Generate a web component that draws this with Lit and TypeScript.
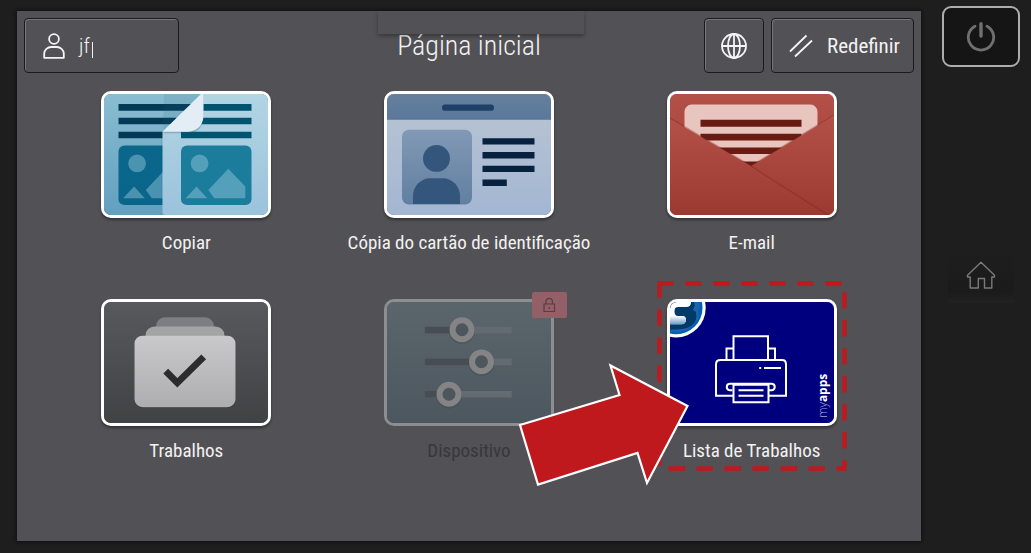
import { LitElement, html, svg, css, nothing } from "lit";
import { customElement, property } from "lit/decorators.js";

type Tile = { id: string; label: string; locked?: boolean; marked?: boolean };

const TILES: Tile[] = [
  { id: "copy", label: "Copiar" },
  { id: "idcard", label: "Cópia do cartão de identificação" },
  { id: "email", label: "E-mail" },
  { id: "jobs", label: "Trabalhos" },
  { id: "device", label: "Dispositivo", locked: true },
  { id: "joblist", label: "Lista de Trabalhos", marked: true },
];

const gradient = (id: string, from: string, to: string) => svg`
  <linearGradient id=${id} x1="0" y1="0" x2="0" y2="1">
    <stop offset="0" stop-color=${from} /><stop offset="1" stop-color=${to} />
  </linearGradient>`;

const picture = (tint: string) => svg`
  <rect x="77" y="52" width="70.5" height="60" rx="6" fill=${tint} />
  <g fill="#8cc4da" fill-opacity=".5">
    <circle cx="95.6" cy="70" r="8.9" />
    <path d="M81.6 105 92.6 93.3 103.3 105Z" />
    <path d="M104.3 96.7 124.3 75.3 141.3 93.3V105H110.3Z" />
  </g>`;

const ART: Record<string, unknown> = {
  copy: svg`
    <defs>${gradient("back", "#8abdd1", "#629fbf")}${gradient("front", "#b2d5e3", "#9bc3dc")}</defs>
    <rect width="164" height="122" fill="url(#back)" />
    <path d="M14.5 10h80v7h-80zM14.5 24h80v6.500h-80zM14.500 38h60v6.500h-60z" fill="#033b57" />
    <g transform="translate(-62.500 0)" opacity=".9">${picture("#005f85")}</g>
    <path d="M57 122V38L97 0H60Z" fill="#285f7c" fill-opacity=".12" />
    <path d="M58.500 119V38L98 0H164V122H61.500Q58.500 122 58.500 119Z" fill="url(#front)" />
    <path d="M97 10h50.500v7H97zM90 24h57.500v6.500H90zM77 38h70.500v6.500H77z" fill="#00546f" />
    ${picture("#1c7c9b")}
    <path d="M58.500 39.500 99.500 0V23Q99 39 84 39.500Z" fill="#2a6379" fill-opacity=".3" />
    <path d="M58.500 38 97 0H99.500V23Q98 37 84 38Z" fill="#e2edf5" />`,
  idcard: svg`
    <defs>${gradient("card", "#b9c5d3", "#a3b6d2")}${gradient("band", "#65809d", "#5b789c")}${gradient("photo", "#8199b5", "#617fa1")}</defs>
    <rect width="164" height="122" fill="url(#card)" />
    <rect width="164" height="26" fill="url(#band)" />
    <rect x="55" y="10.500" width="52" height="6.500" rx="3" fill="#1f4069" />
    <rect x="15" y="36" width="70" height="75.500" rx="7" fill="url(#photo)" />
    <circle cx="49.500" cy="65" r="13.500" fill="#35567c" />
    <path d="M26 111V103A17 18 0 0 1 43 85H56A17 18 0 0 1 73 103V111Z" fill="#35567c" />
    <path d="M95.500 44.500h52V51h-52zM95.500 58.500h52V65h-52zM95.500 72.300h52v6.400h-52zM95.500 86.300h24.300v6.400H95.500z" fill="#08213f" />`,
  email: svg`
    <defs>${gradient("inside", "#b35048", "#9f3f37")}${gradient("flap", "#b35048", "#9c3930")}</defs>
    <rect width="164" height="122" fill="url(#inside)" />
    <rect x="14.500" y="10.700" width="133" height="80" rx="7" fill="#e8c5bf" />
    <path d="M30.500 26h101v7h-101zM30.500 40h101v7h-101zM30.500 54h101v6.500h-101zM30.500 68h101v6.500h-101z" fill="#671b12" />
    <path d="M81 71.500 164 20.500V122H0V23.500Z" fill="#7c211a" fill-opacity=".35" />
    <path d="M81 72.700 164 21.700V122H60Z" fill="url(#flap)" />
    <path d="M0 25 81 72.700 158 122H0Z" fill="url(#flap)" />
    <path d="M81 72.700 158 122" stroke="#7d2a24" stroke-opacity=".5" stroke-width="1.200" />`,
  jobs: svg`
    <defs>${gradient("slate", "#57595c", "#414244")}${gradient("sheet", "#c9c9cb", "#aeaeb1")}</defs>
    <rect width="164" height="122" fill="url(#slate)" />
    <rect x="52" y="15.500" width="58" height="30" rx="9" fill="#7d7e81" />
    <rect x="41.500" y="24.700" width="79" height="30" rx="9" fill="#a3a4a6" />
    <rect x="30.500" y="35" width="101" height="72" rx="8" fill="#222" fill-opacity=".35" />
    <rect x="30.500" y="34" width="101" height="72" rx="8" fill="url(#sheet)" />
    <path d="M61.700 69.700 73.300 81.500 99.700 55.300" fill="none" stroke="#2c2c2e" stroke-width="6.800" />`,
  device: svg`
    <defs>${gradient("steel", "#5b656c", "#4d575f")}</defs>
    <rect width="164" height="122" fill="url(#steel)" />
    <path d="M37.700 25h87v6.700h-87zM37.700 57h87v6.700h-87zM37.700 89.700h87v6.700h-87z" fill="#626b72" />
    <path d="M37.700 25H70v6.700H37.700zM37.700 57H90v6.700H37.700zM37.700 89.700H58v6.700H37.700z" fill="#474d52" />
    <g fill="none" stroke="#3d454b" stroke-opacity=".3" stroke-width="7">
      <circle cx="75" cy="29.300" r="9.500" /><circle cx="94.500" cy="61.600" r="9.500" /><circle cx="62" cy="94.300" r="9.500" />
    </g>
    <g fill="#4d565d" stroke="#848486" stroke-width="6">
      <circle cx="75" cy="28" r="9.500" /><circle cx="94.500" cy="60.300" r="9.500" /><circle cx="62" cy="93" r="9.500" />
    </g>`,
  joblist: svg`
    <defs>
      <clipPath id="disc"><circle cx="6" cy="6" r="26.500" /></clipPath>
      <linearGradient id="fade" x1="0" y1="0" x2="0" y2="1">
        <stop offset="0" stop-color="#fff" /><stop offset="1" stop-color="#6d9cc4" />
      </linearGradient>
    </defs>
    <rect width="164" height="122" fill="#00007f" />
    <circle cx="6" cy="6" r="29.700" fill="#fff" />
    <g clip-path="url(#disc)">
      <rect width="36" height="36" fill="#005fb8" />
      <path d="M24 0H29Q31 5 28 9 30 15 26 20 20 29 8 30H0V26H10Z" fill="#1c66ab" />
      <path d="M0 0H23V8L26 10Q28 20 20 25 15 28 0 28Z" fill="#003a69" />
      <path d="M0 0H21V1Q21 5 17 5H8Q4.500 5 4.500 9.500T8 14H12Q16 14 16 18T12 22.500H0Z" fill="#fff" />
      <path d="M0 14H12Q16 14 16 18T12 22.500H0Z" fill="url(#fade)" />
      <path d="M21 0H24Q26 5 22.500 8H17V5Q21 5 21 1Z" fill="#003a69" />
    </g>
    <g fill="none" stroke="#fff" stroke-width="2">
      <path d="M63.500 58.500V34.500H98V58.500" />
      <path d="M56.500 58.500V47H63M98 47H105V58.500" />
      <path d="M63 94.500H46V63Q46 58.500 50.500 58.500H112Q116 58.500 116 63V94.500H99" />
      <path d="M62.500 89H59.500A3.300 3.300 0 0 1 59.500 82.500H102A3.300 3.300 0 0 1 102 89H99" />
      <path d="M63.500 83.500H98.500V101H63.500Z" />
      <path d="M68.500 89H93.500M68.500 94.500H93.500M94 66.500H111M89.200 66.500H91.200" />
    </g>
    <text transform="translate(157 117) rotate(-90)" font-family="Open Sans" font-size="12" fill="#fff"><tspan font-weight="300" fill="#a5a5da">my</tspan><tspan font-weight="700">apps</tspan></text>`,
};

@customElement("app-tile")
export class AppTile extends LitElement {
  @property() kind = "";
  @property() label = "";
  @property({ type: Boolean, reflect: true }) locked = false;
  @property({ type: Boolean }) marked = false;

  static styles = css`
    :host { display: flex; justify-content: center; }
    .tile {
      position: relative; display: flex; flex-direction: column; align-items: center; gap: 14px;
      width: 170px; margin: 0; padding: 0; border: 0; background: none; color: #f2f2f2;
      font: 400 19px/22px "Roboto Condensed", Roboto, sans-serif; cursor: pointer;
    }
    .art {
      display: block; box-sizing: border-box; width: 100%; height: 127px; overflow: hidden;
      border: 3px solid #fff; border-radius: 10px; box-shadow: 0 2px 3px #0006;
    }
    .art svg { display: block; width: 100%; height: 100%; }
    .label { white-space: nowrap; }
    .tile:disabled { color: #38383b; cursor: default; }
    .tile:disabled .art { border-color: #8d8e91; box-shadow: none; }
    .badge {
      position: absolute; top: -7px; right: -13px; display: grid; place-items: center;
      width: 35px; height: 26px; border-radius: 2px; background: #936067;
    }
    .marker { position: absolute; top: -18px; left: -10px; width: 190px; height: 190px; pointer-events: none; }
    .arrow { position: absolute; top: 64px; left: -150px; width: 174px; height: 126px; pointer-events: none; }
  `;

  render() {
    return html`
      <button class="tile" type="button" ?disabled=${this.locked}>
        <span class="art"><svg viewBox="0 0 164 122" preserveAspectRatio="none" aria-hidden="true">${ART[this.kind]}</svg></span>
        <span class="label">${this.label}</span>
        ${this.locked
          ? html`<span class="badge"><svg width="14" height="16" viewBox="0 0 14 16" fill="none" stroke="#5d3a42" stroke-width="1.200">
              <path d="M2 7H12.500V14.500H2ZM4 7V4.500A3.200 3.200 0 0 1 10.400 4.500V7M7.200 10V12" /></svg></span>`
          : nothing}
        ${this.marked
          ? html`<svg class="marker" viewBox="0 0 190 190" aria-hidden="true">
                <path d="M2.500 2.500H187.500V187.500H2.500Z" fill="none" stroke="#bf181d" stroke-width="4.300" stroke-dasharray="16.300 11.700" stroke-dashoffset="2.300" />
              </svg>
              <svg class="arrow" viewBox="0 0 174 126" aria-hidden="true">
                <path d="M3 62 102.500 32 93.500 2.500 170.500 43 130 120 120.500 90 21 121.500Z" fill="#bf181d" stroke="#fff" stroke-width="2.200" />
              </svg>`
          : nothing}
      </button>`;
  }
}

@customElement("app-root")
export class AppRoot extends LitElement {
  static styles = css`
    :host {
      display: block; min-height: 100vh; background: #1e1e1e; color: #f2f2f2;
      font-family: "Roboto Condensed", Roboto, sans-serif;
    }
    .panel { display: grid; grid-template-columns: minmax(0, 1fr) 110px; min-height: 100vh; }
    .screen {
      position: relative; display: flex; flex-direction: column; gap: 18px;
      margin: 11px 0 12px 17px; padding: 7px; background: #525155; box-shadow: 0 0 3px 1px #101010;
    }
    .notch { position: absolute; top: 0; left: 361px; width: 206px; height: 23px; background: #525155; box-shadow: 0 2px 4px #0005; }
    .bar { display: grid; grid-template-columns: 1fr auto 1fr; align-items: center; }
    .tools { display: flex; justify-content: flex-end; gap: 7px; }
    .btn {
      box-sizing: border-box; display: flex; align-items: center; justify-content: center; gap: 14px;
      height: 55px; margin: 0; padding: 0 13px 0 15px; border: 1px solid #1b1b1e; border-radius: 4px;
      background: none; color: inherit; font: 400 21px/24px "Roboto Condensed", Roboto, sans-serif;
      box-shadow: inset 1px 1px 0 #77767a; cursor: pointer;
    }
    .btn svg { flex: none; }
    .user { justify-content: flex-start; width: 155px; padding: 0 18px; gap: 14px; font-weight: 300; }
    .cut { display: inline-block; width: 1px; height: 16px; margin-left: 2px; background: currentColor; vertical-align: -5px; }
    .globe { width: 60px; padding: 0; }
    h1 { margin: 0; font-size: 28px; line-height: 32px; font-weight: 300; }
    .grid { display: grid; grid-template-columns: repeat(3, minmax(0, 1fr)); row-gap: 45px; padding: 0 21px; }
    .side { display: flex; flex-direction: column; align-items: center; gap: 180px; padding: 6px 0 0 9px; }
    .side button { box-sizing: border-box; display: grid; place-items: center; margin: 0; padding: 0; cursor: pointer; }
    .power { width: 78px; height: 61px; border: 2px solid #adadad; border-radius: 9px; background: #151515; }
    .home { width: 66px; height: 56px; border: 0; background: linear-gradient(#1e1e1e, #1b1b1b 80%, #222); }
  `;

  render() {
    return html`
      <div class="panel">
        <main class="screen">
          <header class="bar">
            <button class="btn user" type="button">
              <svg width="22" height="26" viewBox="0 0 22 26" fill="none" stroke="#f4f4f4" stroke-width="1.800">
                <circle cx="11" cy="6" r="4.900" /><path d="M1.200 24.800V20.500A7 7 0 0 1 8.200 14H13.800A7 7 0 0 1 20.800 20.500V24.800Z" stroke-linejoin="round" />
              </svg>
              <span>jf<span class="cut"></span></span>
            </button>
            <h1>Página inicial</h1>
            <div class="tools">
              <button class="btn globe" type="button" aria-label="Idioma">
                <svg width="26" height="26" viewBox="0 0 26 26" fill="none" stroke="#f4f4f4" stroke-width="1.800">
                  <circle cx="13" cy="13" r="12" /><ellipse cx="13" cy="13" rx="6" ry="12" /><path d="M13 1V25M1 13H25" />
                </svg>
              </button>
              <button class="btn" type="button">
                <svg width="26" height="24" viewBox="0 0 26 24" fill="none" stroke="#f4f4f4" stroke-width="1.800">
                  <path d="M3 17.500 19.500 1.500M8 22.500 25 6.500" />
                </svg>
                Redefinir
              </button>
            </div>
          </header>
          <div class="notch"></div>
          <section class="grid">
            ${TILES.map((t) => html`<app-tile .kind=${t.id} .label=${t.label} ?locked=${t.locked} .marked=${!!t.marked}></app-tile>`)}
          </section>
        </main>
        <aside class="side">
          <button class="power" type="button" aria-label="Ligar">
            <svg width="30" height="30" viewBox="0 0 30 30" fill="none" stroke="#707070" stroke-width="2.800" stroke-linecap="round">
              <path d="M9 4.200A12.700 12.700 0 1 0 21 4.200" /><path d="M15 1.800V14" stroke-width="3.400" />
            </svg>
          </button>
          <button class="home" type="button" aria-label="Início">
            <svg width="30" height="28" viewBox="0 0 30 28" fill="none" stroke="#7a7a7a" stroke-width="1.400" stroke-linejoin="round">
              <path d="M15 1.200 28.500 14.200V16H25.800V27H18.500V17.500H12.300V27H4.200V16H1.500V14.200Z" />
            </svg>
          </button>
        </aside>
      </div>`;
  }
}
